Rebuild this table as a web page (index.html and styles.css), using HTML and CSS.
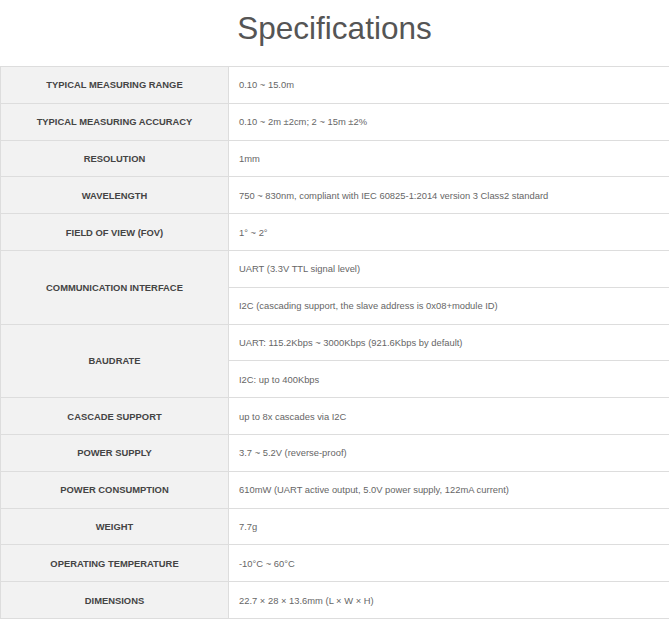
FILE: index.html
```html
<!DOCTYPE html>
<html>
<head>
<meta charset="utf-8">
<link rel="stylesheet" href="styles.css">
</head>
<body>
<h1 class="title">Specifications</h1>
<table class="spec">
<tbody>
<tr><th>TYPICAL MEASURING RANGE</th><td>0.10 ~ 15.0m</td></tr>
<tr><th>TYPICAL MEASURING ACCURACY</th><td>0.10 ~ 2m ±2cm; 2 ~ 15m ±2%</td></tr>
<tr><th>RESOLUTION</th><td>1mm</td></tr>
<tr><th>WAVELENGTH</th><td>750 ~ 830nm, compliant with IEC 60825-1:2014 version 3 Class2 standard</td></tr>
<tr><th>FIELD OF VIEW (FOV)</th><td>1° ~ 2°</td></tr>
<tr><th rowspan="2">COMMUNICATION INTERFACE</th><td>UART (3.3V TTL signal level)</td></tr>
<tr><td>I2C (cascading support, the slave address is 0x08+module ID)</td></tr>
<tr><th rowspan="2">BAUDRATE</th><td>UART: 115.2Kbps ~ 3000Kbps (921.6Kbps by default)</td></tr>
<tr><td>I2C: up to 400Kbps</td></tr>
<tr><th>CASCADE SUPPORT</th><td>up to 8x cascades via I2C</td></tr>
<tr><th>POWER SUPPLY</th><td>3.7 ~ 5.2V (reverse-proof)</td></tr>
<tr><th>POWER CONSUMPTION</th><td>610mW (UART active output, 5.0V power supply, 122mA current)</td></tr>
<tr><th>WEIGHT</th><td>7.7g</td></tr>
<tr><th>OPERATING TEMPERATURE</th><td>-10°C ~ 60°C</td></tr>
<tr><th>DIMENSIONS</th><td>22.7 × 28 × 13.6mm (L × W × H)</td></tr>
</tbody>
</table>
</body>
</html>
```
FILE: styles.css
```css
html, body {
  margin: 0;
  padding: 0;
  background: #fff;
  overflow-x: hidden;
}
body {
  font-family: "Liberation Sans", Arial, sans-serif;
}
.title {
  margin: 0;
  padding-top: 8px;
  height: 58px;
  box-sizing: border-box;
  text-align: center;
  font-weight: normal;
  font-size: 31.5px;
  line-height: 40px;
  color: #555;
}
.spec {
  border-collapse: collapse;
  width: 680px;
  table-layout: fixed;
  margin-top: 8px;
}
.spec th, .spec td {
  border: 1px solid #ddd;
  height: 36.8px;
  padding: 0 10px;
  font-size: 9.4px;
  box-sizing: border-box;
}
.spec th {
  width: 228px;
  background: #f2f2f2;
  color: #444;
  font-weight: bold;
  text-align: center;
}
.spec td {
  color: #666;
  text-align: left;
}
```
